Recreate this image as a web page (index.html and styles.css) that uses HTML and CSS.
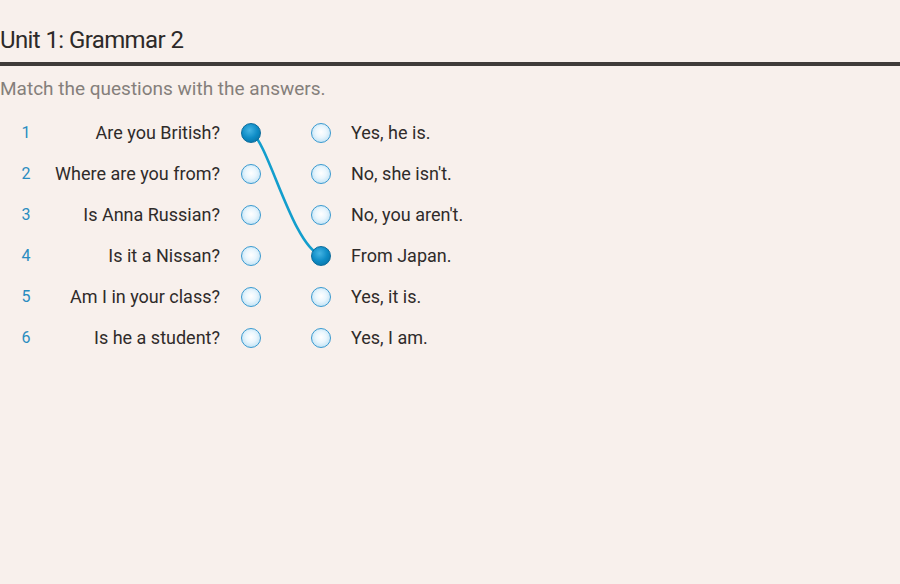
FILE: index.html
```html
<!DOCTYPE html>
<html lang="en">
<head>
<meta charset="utf-8">
<title>Unit 1: Grammar 2</title>
<link rel="stylesheet" href="styles.css">
</head>
<body>
<header class="header">
  <h1 class="title">Unit 1: Grammar 2</h1>
</header>
<p class="instruction">Match the questions with the answers.</p>
<div class="matcher">
  <svg class="links" width="900" height="246" viewBox="0 0 900 246" aria-hidden="true">
    <path d="M251 20.5 C 268 28.5, 292 133.5, 321 143.5" fill="none" stroke="#139ecd" stroke-width="2.6" stroke-linecap="round"/>
  </svg>
  <div class="row"><span class="num">1</span><span class="q">Are you British?</span><span class="dot dot-left is-on"></span><span class="dot dot-right"></span><span class="a">Yes, he is.</span></div>
  <div class="row"><span class="num">2</span><span class="q">Where are you from?</span><span class="dot dot-left"></span><span class="dot dot-right"></span><span class="a">No, she isn't.</span></div>
  <div class="row"><span class="num">3</span><span class="q">Is Anna Russian?</span><span class="dot dot-left"></span><span class="dot dot-right"></span><span class="a">No, you aren't.</span></div>
  <div class="row"><span class="num">4</span><span class="q">Is it a Nissan?</span><span class="dot dot-left"></span><span class="dot dot-right is-on"></span><span class="a">From Japan.</span></div>
  <div class="row"><span class="num">5</span><span class="q">Am I in your class?</span><span class="dot dot-left"></span><span class="dot dot-right"></span><span class="a">Yes, it is.</span></div>
  <div class="row"><span class="num">6</span><span class="q">Is he a student?</span><span class="dot dot-left"></span><span class="dot dot-right"></span><span class="a">Yes, I am.</span></div>
</div>
</body>
</html>
```
FILE: styles.css
```css
html, body {
  margin: 0;
  padding: 0;
  background: #f8f0ec;
}
body {
  font-family: Roboto, "Liberation Sans", sans-serif;
  color: #2f2b2a;
}
.header {
  border-bottom: 4px solid #3f3b39;
}
.title {
  margin: 0;
  padding: 25px 0 7px;
  font-size: 24px;
  line-height: 30px;
  font-weight: 400;
  letter-spacing: -0.6px;
  color: #2d2a29;
}
.instruction {
  margin: 11px 0 0;
  font-size: 19px;
  line-height: 24px;
  color: #857f7b;
  letter-spacing: 0;
}
.matcher {
  position: relative;
  margin-top: 11px;
}
.links {
  position: absolute;
  top: 0;
  left: 0;
}
.row {
  display: flex;
  align-items: center;
  height: 41px;
  font-size: 18px;
  letter-spacing: 0;
}
.num {
  width: 52px;
  text-align: center;
  font-size: 16px;
  font-weight: 400;
  color: #2a8cc0;
}
.q {
  width: 168px;
  text-align: right;
}
.dot {
  position: relative;
  z-index: 1;
  box-sizing: border-box;
  width: 20px;
  height: 20px;
  border-radius: 50%;
  border: 1.6px solid #3a9ad0;
  background: radial-gradient(circle at 50% 45%, #ffffff 0%, #eaf6fd 40%, #a9d7f0 100%);
}
.dot-left { margin-left: 21px; }
.dot-right { margin-left: 50px; }
.dot.is-on {
  border-color: #086b9c;
  background: radial-gradient(circle at 42% 35%, #45b4e3 0%, #0e8cc6 50%, #066a99 100%);
}
.a {
  margin-left: 20px;
}
```
